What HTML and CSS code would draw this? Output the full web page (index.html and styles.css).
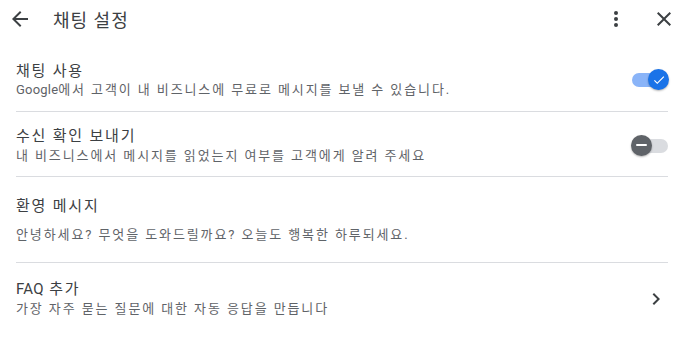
FILE: index.html
```html
<!DOCTYPE html>
<html lang="ko">
<head>
<meta charset="utf-8">
<link rel="stylesheet" href="styles.css">
</head>
<body>
<div class="page">
  <header class="topbar">
    <button class="icon-btn back" aria-label="뒤로">
      <svg width="24" height="24" viewBox="0 0 24 24"><path d="M20 11H7.83l5.59-5.59L12 4l-8 8 8 8 1.41-1.41L7.83 13H20v-2z" fill="#3c4043"/></svg>
    </button>
    <h1 class="title">채팅 설정</h1>
    <div class="spacer"></div>
    <button class="icon-btn more" aria-label="더보기">
      <svg width="24" height="24" viewBox="0 0 24 24"><circle cx="12" cy="6" r="2" fill="#3c4043"/><circle cx="12" cy="12" r="2" fill="#3c4043"/><circle cx="12" cy="18" r="2" fill="#3c4043"/></svg>
    </button>
    <button class="icon-btn close" aria-label="닫기">
      <svg width="24" height="24" viewBox="0 0 24 24"><path d="M19 6.41L17.59 5 12 10.59 6.41 5 5 6.41 10.59 12 5 17.59 6.41 19 12 13.41 17.59 19 19 17.59 13.41 12z" fill="#3c4043"/></svg>
    </button>
  </header>

  <div class="list">
    <div class="row r1">
      <div class="text">
        <div class="primary">채팅 사용</div>
        <div class="secondary"><span class="latin">Google</span>에서 고객이 내 비즈니스에 무료로 메시지를 보낼 수 있습니다.</div>
      </div>
      <div class="toggle on">
        <div class="track"></div>
        <div class="knob">
          <svg width="14" height="14" viewBox="0 0 24 24"><path d="M9 16.17L4.83 12l-1.42 1.41L9 19 21 7l-1.41-1.41z" fill="#fff"/></svg>
        </div>
      </div>
    </div>
    <div class="row r2">
      <div class="text">
        <div class="primary">수신 확인 보내기</div>
        <div class="secondary">내 비즈니스에서 메시지를 읽었는지 여부를 고객에게 알려 주세요</div>
      </div>
      <div class="toggle off">
        <div class="track"></div>
        <div class="knob"><span class="dash"></span></div>
      </div>
    </div>
    <div class="row r3">
      <div class="text">
        <div class="primary">환영 메시지</div>
        <div class="secondary welcome">안녕하세요? 무엇을 도와드릴까요? 오늘도 행복한 하루되세요.</div>
      </div>
    </div>
    <div class="row r4">
      <div class="text">
        <div class="primary"><span class="latin">FAQ</span> 추가</div>
        <div class="secondary">가장 자주 묻는 질문에 대한 자동 응답을 만듭니다</div>
      </div>
      <svg class="chev" width="24" height="24" viewBox="0 0 24 24"><path d="M10 6L8.59 7.41 13.17 12l-4.58 4.59L10 18l6-6z" fill="#3c4043"/></svg>
    </div>
  </div>
</div>
</body>
</html>
```

FILE: styles.css
```css
* { box-sizing: border-box; }
html, body { margin: 0; padding: 0; background: #fff; }
body {
  font-family: Roboto, "Noto Sans CJK KR", sans-serif;
  color: #3c4043;
  width: 685px;
  height: 346px;
  overflow: hidden;
}
.topbar {
  display: flex;
  align-items: center;
  height: 38px;
  padding: 0 4px 0 8px;
}
.icon-btn {
  border: 0;
  background: none;
  padding: 0;
  width: 24px;
  height: 24px;
  display: flex;
  align-items: center;
  justify-content: center;
}
.title {
  margin: 0 0 0 21px;
  font-size: 18px;
  font-weight: 400;
  color: #3c4043;
  letter-spacing: 1px;
}
.spacer { flex: 1; }
.more { margin-right: 24px; }
.close { margin-right: 5px; }

.list { padding: 0 17px 0 16px; }
.row {
  display: flex;
  align-items: center;
  border-bottom: 1px solid #dadce0;
}
.row:last-child { border-bottom: 0; }
.r1 { padding: 23px 0 12px; }
.r2 { padding: 14px 0 11px; }
.r3 { padding: 19px 0 18px; }
.r4 { padding: 16px 0 10px; }
.r2 .secondary { margin-top: 1px; }
.r4 .secondary { margin-top: 1px; }
.text { flex: 1; }
.primary {
  font-size: 15px;
  line-height: 20px;
  color: #3c4043;
  letter-spacing: 1.8px;
}
.secondary {
  font-size: 13px;
  line-height: 18px;
  color: #5f6368;
  letter-spacing: 1.9px;
}
.latin { letter-spacing: 0.2px; }
.secondary.welcome { margin-top: 10px; }

.toggle {
  position: relative;
  width: 36px;
  height: 22px;
}
.toggle .track {
  position: absolute;
  left: 0;
  top: 4px;
  width: 36px;
  height: 14px;
  border-radius: 7px;
}
.toggle .knob {
  position: absolute;
  top: 0;
  width: 21px;
  height: 21px;
  border-radius: 50%;
  display: flex;
  align-items: center;
  justify-content: center;
  box-shadow: 0 1px 2px rgba(0,0,0,0.3);
}
.toggle.on .track { background: #8ab4f8; }
.toggle.on .knob { right: -1px; background: #1a73e8; }
.toggle.off .track { background: #dadce0; }
.toggle.off .knob { left: -1px; background: #5f6368; }
.dash {
  width: 11px;
  height: 2px;
  background: #fff;
  border-radius: 1px;
}
.chev { margin-right: 0; }
```
